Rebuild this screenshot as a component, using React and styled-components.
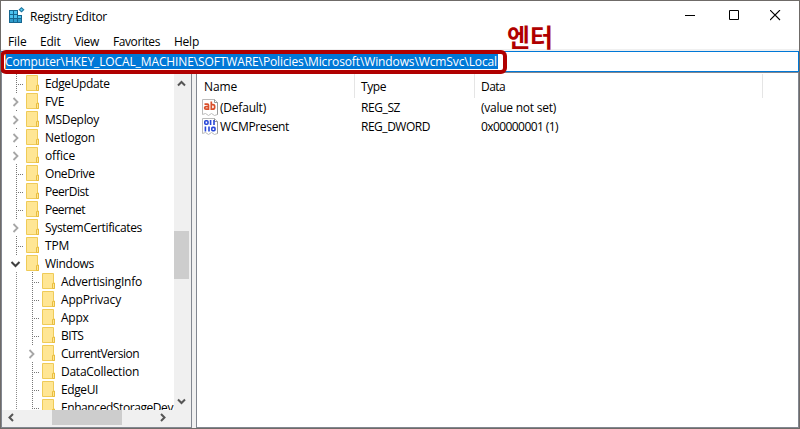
import React, { useLayoutEffect, useRef } from 'react';
import styled, { createGlobalStyle, css } from 'styled-components';

const Global = createGlobalStyle`
  * { box-sizing: border-box; }
  html, body { margin: 0; padding: 0; overflow: hidden; }
`;

const Window = styled.div`
  position: relative;
  width: 800px;
  height: 429px;
  display: flex;
  flex-direction: column;
  overflow: hidden;
  border: 1px solid #6f6b68;
  background: #fff;
  color: #000;
  font-family: 'Open Sans', 'Noto Sans', sans-serif;
  font-size: 12px;
  line-height: 18px;
  white-space: nowrap;
`;

const TitleBar = styled.header`
  flex: none;
  height: 31px;
  display: flex;
  align-items: flex-start;
  padding: 6px 0 0 8px;
`;
const Title = styled.div`
  margin: 0 auto 0 5px;
`;
const Controls = styled.div`
  display: flex;
  gap: 30px;
  padding: 3px 17px 0 0;
`;

const MenuBar = styled.nav`
  flex: none;
  height: 17px;
  display: grid;
  grid-template-columns: 32px 34px 39px 61px 40px;
  justify-items: start;
  padding-left: 7px;
  line-height: 18px;
`;

const AddressStrip = styled.div`
  flex: none;
  height: 24px;
  padding-top: 2px;
  background: #f0f0f0;
  border-bottom: 1px solid #828790;
`;
const Address = styled.div`
  height: 21px;
  display: flex;
  align-items: center;
  padding-left: 4px;
  border: 1px solid #0078d7;
  border-left: 0;
  background: #fff;
`;
const Selection = styled.span`
  width: 493px;
  height: 15px;
  line-height: 14px;
  background: #0078d7;
  color: #fff;
  box-shadow: inset 1px 0 #ff8728;
`;

const Panes = styled.main`
  flex: 1;
  min-height: 0;
  display: flex;
  gap: 4px;
  background: #f0f0f0;
`;
const TreePane = styled.section`
  width: 191px;
  display: grid;
  grid-template-columns: 172px 17px;
  grid-template-rows: 337px 17px;
  background: #fff;
  border: 1px solid #828790;
  border-top: 0;
`;
const TreeView = styled.div`
  overflow: hidden;
  padding-top: 1px;
`;
const TreeRow = styled.div`
  height: 18px;
  display: flex;
`;
const dots = css`
  background-image: linear-gradient(#8a8a8a 50%, transparent 50%);
  background-size: 1px 2px;
`;
const Guide = styled.span`
  flex: none;
  width: 1px;
  height: 18px;
  margin: 0 1px 0 14px;
  ${dots}
`;
const Branch = styled.span`
  flex: none;
  width: 24px;
  height: 18px;
`;
const TreeLabel = styled.span`
  flex: none;
  padding-left: 6px;
`;

const ScrollTrack = styled.div`
  display: flex;
  flex-direction: ${(p) => (p.$horizontal ? 'row' : 'column')};
  justify-content: space-between;
  align-items: ${(p) => (p.$horizontal ? 'center' : 'flex-start')};
  padding: ${(p) => (p.$horizontal ? '0 7px 2px 5px' : '6px 0 4px')};
  background: #f0f0f0;
`;
const Thumb = styled.div`
  width: ${(p) => (p.$horizontal ? '70px' : '15px')};
  height: ${(p) => (p.$horizontal ? '15px' : '48px')};
  margin: ${(p) => (p.$horizontal ? '0 0 0 -1px' : '25px 0 0')};
  background: #cdcdcd;
`;
const VerticalArrow = styled.span`
  display: flex;
  width: 15px;
  justify-content: center;
`;
const Corner = styled.div`
  background: #f0f0f0;
`;

const ListPane = styled.section`
  flex: 1;
  background: #fff;
  border: 1px solid #828790;
  border-top: 0;
`;
const Columns = styled.div`
  display: grid;
  grid-template-columns: 158px 120px 288px;
`;
const HeaderCell = styled.div`
  height: 24px;
  margin-top: 1px;
  padding: 3px 0 0 ${(p) => (p.$first ? '7px' : '6px')};
  border-right: 1px solid #e5e5e5;
`;
const ValueRow = styled(Columns)`
  height: 19px;
`;
const Cell = styled.div`
  display: flex;
  align-items: center;
  padding-left: ${(p) => (p.$first ? '5px' : '6px')};
`;
const ValueName = styled.span`
  margin-left: 2px;
`;

const Highlight = styled.div`
  position: absolute;
  left: -1px;
  top: 49px;
  width: 507px;
  height: 24px;
  border: 4px solid #b00000;
  border-radius: 6px;
`;
const Note = styled.div`
  position: absolute;
  left: 506px;
  top: 17px;
  font: bold 25px/36px 'Noto Sans CJK KR', sans-serif;
  color: #b00000;
`;

/* Text tracked so that it fills the given width. */
const Tracked = styled.span`
  display: inline-block;
  padding-top: 1px;
`;
function Text({ w, children }) {
  const ref = useRef(null);
  useLayoutEffect(() => {
    const el = ref.current;
    el.style.letterSpacing = '0px';
    const natural = el.getBoundingClientRect().width;
    el.style.letterSpacing = `${(w - natural) / children.length}px`;
  }, [w, children]);
  return <Tracked ref={ref}>{children}</Tracked>;
}

const AppIcon = () => (
  <svg width="16" height="17" viewBox="0 0 16 17">
    <path d="M0 3h9v5h4v8H0z" fill="#16668f" />
    <path d="M1 4h3v3H1zM5 4h3v3H5zM1 8h3v3H1zM5 8h3v3H5zM9 9h3v2H9z" fill="#4cc2ee" />
    <path d="M1 12h3v3H1zM5 12h3v3H5zM9 12h3v3H9z" fill="#2e9ccc" />
    <path d="M12.5 0l3 2.7-3 2.8-3-2.8z" fill="#1b759f" />
    <path d="M12.5 1.5l1.4 1.2-1.4 1.3-1.4-1.3z" fill="#5fd0f5" />
  </svg>
);

const Folder = () => (
  <svg width="13" height="18" viewBox="0 0 13 18">
    <path d="M.5 1.5h11v11h1v4H.5z" fill="#ffe694" stroke="#efcb58" />
    <path d="M10.5 16.5v-5l2-.5v5.5z" fill="#ffe694" stroke="#e8bd3f" />
  </svg>
);

const Expander = ({ kind }) => (
  <svg width="24" height="18" viewBox="0 0 24 18">
    {kind === 'leaf' && (
      <>
        <path d="M14.5 0v18" stroke="#777" strokeDasharray="1 1" />
        <path d="M16 10.5h5" stroke="#777" strokeDasharray="1 1" />
      </>
    )}
    {kind !== 'leaf' && <path d="M14.5 0v1" stroke="#777" />}
    {kind === 'closed' && <path d="M11.5 6l4 4-4 4" fill="none" stroke="#a6a6a6" strokeWidth="1.8" />}
    {kind === 'open' && <path d="M9.5 8l4 4 4-4" fill="none" stroke="#404040" strokeWidth="2" />}
  </svg>
);

const arrows = {
  up: 'M1 6.5l3.5-3.5L8 6.5',
  down: 'M1 2.5L4.5 6 8 2.5',
  left: 'M6 1L2.5 4.5 6 8',
  right: 'M3 1l3.5 3.5L3 8',
};
const Arrow = ({ dir }) => (
  <svg width="9" height="9" viewBox="0 0 9 9">
    <path d={arrows[dir]} fill="none" stroke="#555" strokeWidth="2" />
  </svg>
);

const Page = ({ children }) => (
  <svg width="16" height="17" viewBox="0 0 16 17">
    <path d="M.5.5h12l3 3v12l-3 1-3-2-3 2-3-2-3 1z" fill="#fff" stroke="#bbb" />
    <path d="M12.5.5v3h3v12" fill="none" stroke="#999" />
    {children}
  </svg>
);
const StringIcon = () => (
  <Page>
    <g fill="none" stroke="#d9502c" strokeWidth="1.7">
      <path d="M2.5 5.2h3c.8 0 1 .4 1 1V11M6.5 7.6H4c-1.8 0-1.8 2.6 0 2.6h2.5" />
      <path d="M9.3 2.5V11M9.3 5.6h1.6c2.4 0 2.4 4.6 0 4.6H9.3" />
    </g>
  </Page>
);
const BinaryIcon = () => (
  <Page>
    <g fill="none" stroke="#2746d8" strokeWidth="1.6">
      <rect x="2.8" y="2.8" width="3.2" height="3.4" rx="1" />
      <rect x="9.8" y="9.4" width="3.2" height="3.4" rx="1" />
      <path d="M8.6 2v5M12 2v5M3.4 8.6v5M7 8.6v5" />
    </g>
  </Page>
);

const tree = [
  ['EdgeUpdate', 64.5, 'leaf'],
  ['FVE', 19, 'closed'],
  ['MSDeploy', 54, 'closed'],
  ['Netlogon', 50, 'closed'],
  ['office', 30, 'closed'],
  ['OneDrive', 49.5, 'leaf'],
  ['PeerDist', 43.5, 'leaf'],
  ['Peernet', 40, 'leaf'],
  ['SystemCertificates', 97, 'closed'],
  ['TPM', 24, 'leaf'],
  ['Windows', 49, 'open'],
  ['AdvertisingInfo', 81, 'leaf', true],
  ['AppPrivacy', 60, 'leaf', true],
  ['Appx', 27.5, 'leaf', true],
  ['BITS', 22.5, 'leaf', true],
  ['CurrentVersion', 78, 'closed', true],
  ['DataCollection', 78, 'leaf', true],
  ['EdgeUI', 37, 'leaf', true],
  ['EnhancedStorageDev', 112, 'leaf', true],
];

const values = [
  { icon: <StringIcon />, name: ['(Default)', 46], type: ['REG_SZ', 39], data: ['(value not set)', 75] },
  { icon: <BinaryIcon />, name: ['WCMPresent', 69], type: ['REG_DWORD', 69], data: ['0x00000001 (1)', 77] },
];

export default function App() {
  return (
    <Window>
      <Global />
      <TitleBar>
        <AppIcon />
        <Title><Text w={77}>Registry Editor</Text></Title>
        <Controls>
          <svg width="15" height="12" viewBox="0 0 15 12"><path d="M2 5.5h10" stroke="#000" /></svg>
          <svg width="12" height="12" viewBox="0 0 12 12"><path d="M1.5.5h9v9h-9z" fill="none" stroke="#000" /></svg>
          <svg width="12" height="12" viewBox="0 0 12 12"><path d="M0 0l10 10M10 0L0 10" stroke="#000" strokeWidth="1.1" /></svg>
        </Controls>
      </TitleBar>
      <MenuBar>
        <Text w={18.5}>File</Text>
        <Text w={20.5}>Edit</Text>
        <Text w={25}>View</Text>
        <Text w={47}>Favorites</Text>
        <Text w={25}>Help</Text>
      </MenuBar>
      <AddressStrip>
        <Address>
          <Selection>
            <Text w={492}>{'Computer\\HKEY_LOCAL_MACHINE\\SOFTWARE\\Policies\\Microsoft\\Windows\\WcmSvc\\Local'}</Text>
          </Selection>
        </Address>
      </AddressStrip>
      <Panes>
        <TreePane>
          <TreeView>
            {tree.map(([name, w, kind, nested]) => (
              <TreeRow key={name}>
                {nested && <Guide />}
                <Branch><Expander kind={kind} /></Branch>
                <Folder />
                <TreeLabel><Text w={w}>{name}</Text></TreeLabel>
              </TreeRow>
            ))}
          </TreeView>
          <ScrollTrack>
            <VerticalArrow><Arrow dir="up" /></VerticalArrow>
            <Thumb />
            <VerticalArrow><Arrow dir="down" /></VerticalArrow>
          </ScrollTrack>
          <ScrollTrack $horizontal>
            <Arrow dir="left" />
            <Thumb $horizontal />
            <Arrow dir="right" />
          </ScrollTrack>
          <Corner />
        </TreePane>
        <ListPane>
          <Columns>
            <HeaderCell $first><Text w={33}>Name</Text></HeaderCell>
            <HeaderCell><Text w={25}>Type</Text></HeaderCell>
            <HeaderCell><Text w={24}>Data</Text></HeaderCell>
          </Columns>
          {values.map((v) => (
            <ValueRow key={v.name[0]}>
              <Cell $first>
                {v.icon}
                <ValueName><Text w={v.name[1]}>{v.name[0]}</Text></ValueName>
              </Cell>
              <Cell><Text w={v.type[1]}>{v.type[0]}</Text></Cell>
              <Cell><Text w={v.data[1]}>{v.data[0]}</Text></Cell>
            </ValueRow>
          ))}
        </ListPane>
      </Panes>
      <Highlight />
      <Note>엔터</Note>
    </Window>
  );
}
